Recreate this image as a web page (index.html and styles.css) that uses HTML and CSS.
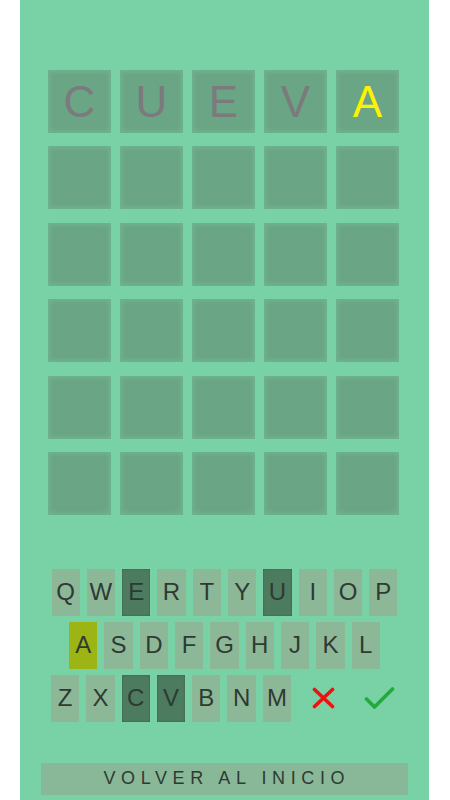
FILE: index.html
```html
<!DOCTYPE html>
<html lang="es">
<head>
<meta charset="utf-8">
<link rel="stylesheet" href="styles.css">
</head>
<body>
<main class="app">
  <section class="board">
    <div class="tile">C</div><div class="tile">U</div><div class="tile">E</div><div class="tile">V</div><div class="tile present">A</div>
    <div class="tile"></div><div class="tile"></div><div class="tile"></div><div class="tile"></div><div class="tile"></div>
    <div class="tile"></div><div class="tile"></div><div class="tile"></div><div class="tile"></div><div class="tile"></div>
    <div class="tile"></div><div class="tile"></div><div class="tile"></div><div class="tile"></div><div class="tile"></div>
    <div class="tile"></div><div class="tile"></div><div class="tile"></div><div class="tile"></div><div class="tile"></div>
    <div class="tile"></div><div class="tile"></div><div class="tile"></div><div class="tile"></div><div class="tile"></div>
  </section>
  <section class="keyboard">
    <div class="krow">
      <div class="key">Q</div><div class="key">W</div><div class="key used">E</div><div class="key">R</div><div class="key">T</div><div class="key">Y</div><div class="key used">U</div><div class="key">I</div><div class="key">O</div><div class="key">P</div>
    </div>
    <div class="krow">
      <div class="key hit">A</div><div class="key">S</div><div class="key">D</div><div class="key">F</div><div class="key">G</div><div class="key">H</div><div class="key">J</div><div class="key">K</div><div class="key">L</div>
    </div>
    <div class="krow">
      <div class="key">Z</div><div class="key">X</div><div class="key used">C</div><div class="key used">V</div><div class="key">B</div><div class="key">N</div><div class="key">M</div>
      <div class="action del">
        <svg width="23" height="22" viewBox="0 0 23 22"><path d="M2.5 2.5 L20.5 19.5 M20.5 2.5 L2.5 19.5" stroke="#ee1111" stroke-width="3.6" stroke-linecap="round" fill="none"/></svg>
      </div>
      <div class="action ok">
        <svg width="31" height="24" viewBox="0 0 31 24"><path d="M2.5 13 L10.5 21 L28.5 3" stroke="#22aa3a" stroke-width="3.6" stroke-linecap="round" stroke-linejoin="round" fill="none"/></svg>
      </div>
    </div>
  </section>
  <button class="back">VOLVER AL INICIO</button>
</main>
</body>
</html>
```
FILE: styles.css
```css
html, body {
  margin: 0;
  padding: 0;
  background: #ffffff;
}
.app {
  width: 409px;
  height: 800px;
  margin-left: 20px;
  background: #79d1a6;
  display: flex;
  flex-direction: column;
  align-items: center;
  font-family: "Liberation Sans", Arial, sans-serif;
  overflow: hidden;
}
.board {
  margin-top: 70px;
  display: grid;
  grid-template-columns: repeat(5, 63px);
  grid-auto-rows: 63px;
  column-gap: 9px;
  row-gap: 13.4px;
  margin-right: 2px;
}
.tile {
  background: #6aa585;
  box-shadow: inset 0 0 5px 2px rgba(121, 209, 166, 0.35);
  display: flex;
  align-items: center;
  justify-content: center;
  font-size: 44px;
  color: #7b7a7c;
  line-height: 1;
}
.tile.present {
  color: #fff200;
}
.keyboard {
  margin-top: 54px;
  display: flex;
  flex-direction: column;
  gap: 6px;
  align-items: center;
}
.krow {
  display: flex;
  gap: 7px;
  height: 47px;
}
.key {
  width: 28.3px;
  background: #8cb898;
  color: #2f3a33;
  font-size: 24px;
  display: flex;
  align-items: center;
  justify-content: center;
}
.key.used {
  background: #4d7b60;
  box-shadow: inset 0 0 2px rgba(40, 60, 50, 0.6);
}
.key.hit {
  background: #9cb514;
}
.action {
  width: 46.5px;
  display: flex;
  align-items: center;
  justify-content: center;
  box-sizing: border-box;
}
.action.del {
  padding-left: 4px;
}
.action.ok {
  padding-left: 9px;
}
.back {
  margin-top: 41px;
  width: 367px;
  height: 32px;
  border: none;
  background: #88b898;
  color: #2f3a33;
  font-family: "Liberation Sans", Arial, sans-serif;
  font-size: 18px;
  letter-spacing: 5.6px;
  padding: 0 0 0 5.6px;
  margin-right: 1px;
}
```
